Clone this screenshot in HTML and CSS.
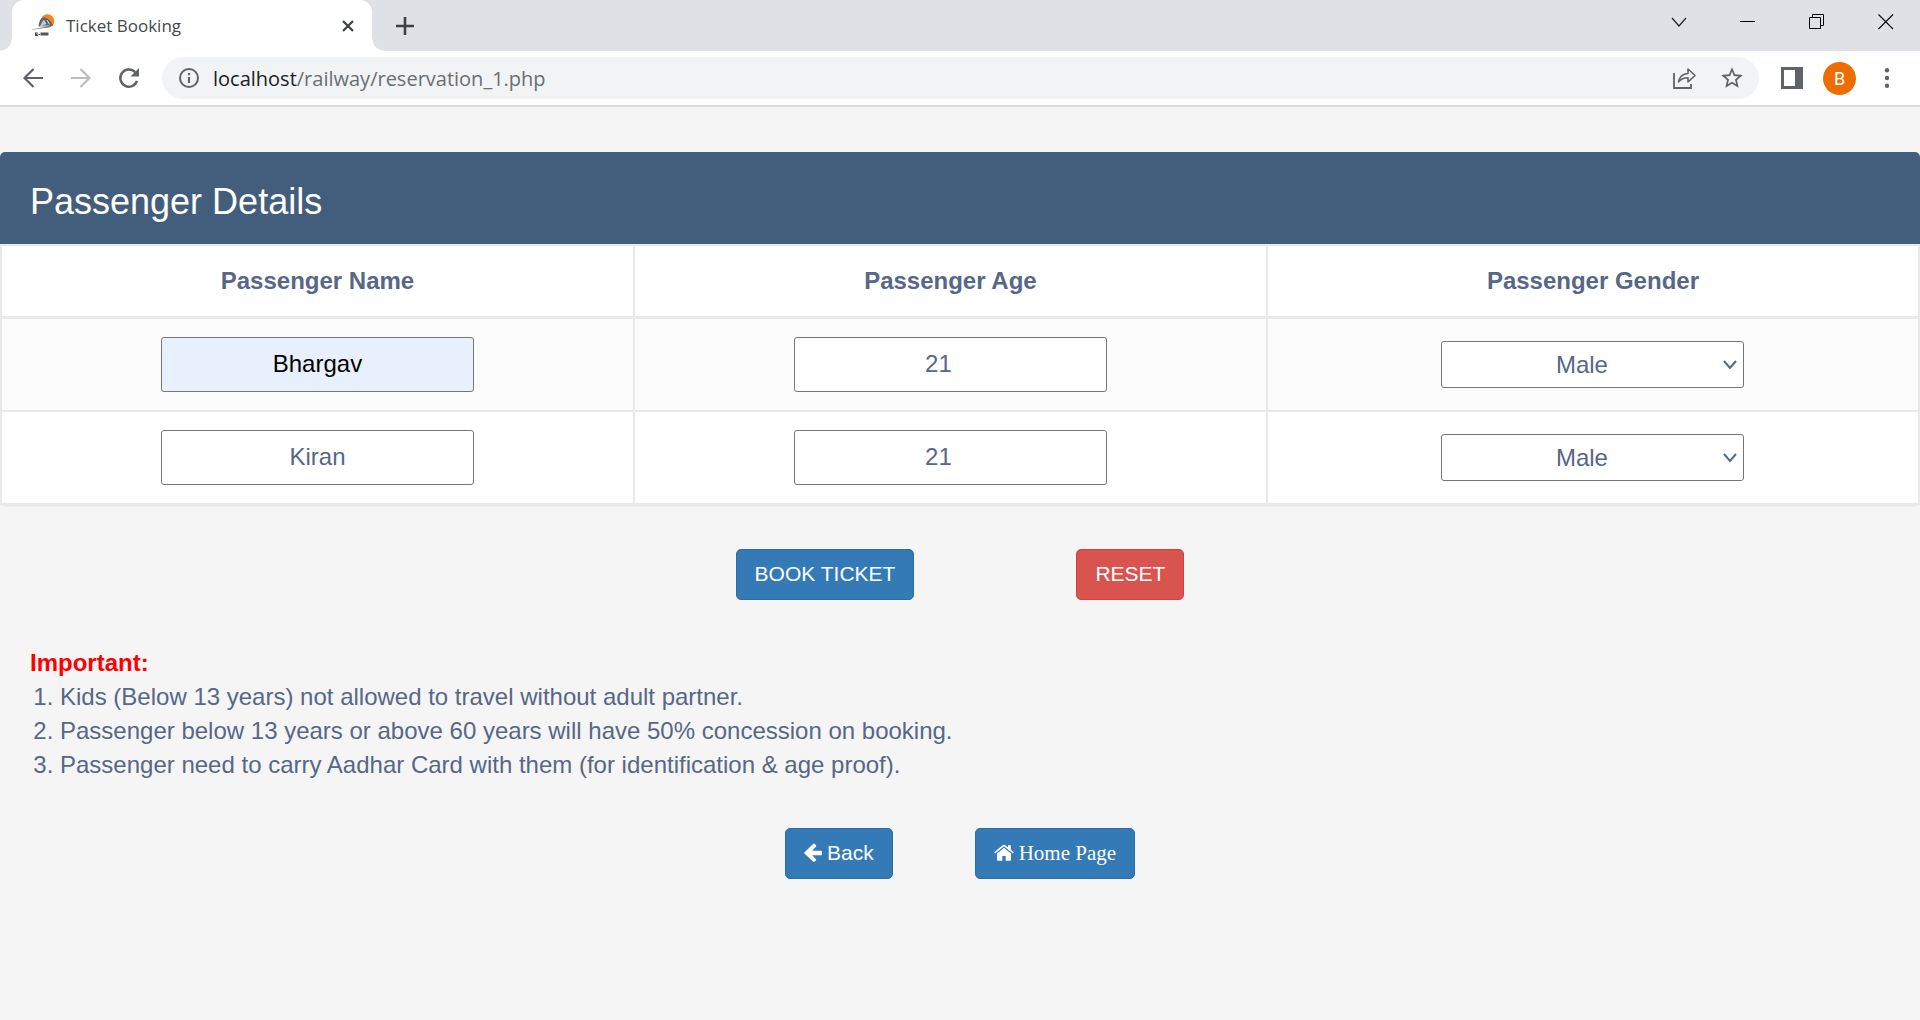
FILE: index.html
```html
<!DOCTYPE html>
<html lang="en">
<head>
<meta charset="utf-8">
<meta name="viewport" content="width=device-width, initial-scale=1">
<title>Ticket Booking</title>
<link rel="stylesheet" href="styles.css">
</head>
<body>
<header class="browser">
  <div class="tab-strip">
    <div class="tab">
      <svg class="favicon" width="24" height="24" viewBox="0 0 24 24" aria-hidden="true">
        <circle cx="16.500" cy="7" r="6.800" fill="#f58220"/>
        <path d="M7.500 12.500C8 7 10 3 13.500 3.500C18 4.500 20.500 8 22 11.500L19 12.500H8Z" fill="#5a646c"/>
        <path d="M10.500 9L13 5.500L15.500 10L9.500 12Z" fill="#c5ccd2"/>
        <path d="M16 6L18.500 10.500M9 12H18" stroke="#dfe4e8" stroke-width="1" fill="none"/>
        <path d="M0 16C6 14 12 14 22.500 10.500C19 14 9 14.500 0 16Z" fill="#777"/>
        <path d="M4.500 18.500V22M4.500 19H7M4.500 20.500H6.500M4.500 21.500H7M7.500 20.500H9" stroke="#444" stroke-width="1" fill="none"/>
        <path d="M9.500 18.500H17.500V21.500H9.500Z" fill="#555"/>
      </svg>
      <span class="tab-title">Ticket Booking</span>
      <button class="icon-button tab-close" type="button" aria-label="Close tab">
        <svg width="14" height="14" viewBox="0 0 14 14"><path d="M2 2L12 12M12 2L2 12" stroke="#3c4043" stroke-width="2.200"/></svg>
      </button>
    </div>
    <button class="icon-button new-tab" type="button" aria-label="New tab">
      <svg width="20" height="20" viewBox="0 0 20 20"><path d="M10 1V19M1 10H19" stroke="#3c4043" stroke-width="2.600"/></svg>
    </button>
    <div class="window-controls">
      <button class="icon-button" type="button" aria-label="Search tabs">
        <svg width="16" height="16" viewBox="0 0 16 16"><path d="M1 4L8 12L15 4" fill="none" stroke="#222" stroke-width="1.200"/></svg>
      </button>
      <button class="icon-button" type="button" aria-label="Minimize">
        <svg width="16" height="16" viewBox="0 0 16 16"><path d="M0 7.500H15" stroke="#000" stroke-width="1"/></svg>
      </button>
      <button class="icon-button" type="button" aria-label="Restore">
        <svg width="16" height="16" viewBox="0 0 16 16"><path d="M.5 3.500H11.500V14.500H.5ZM3.500 3.500V.5H14.500V11.500H11.500" fill="none" stroke="#000" stroke-width="1"/></svg>
      </button>
      <button class="icon-button" type="button" aria-label="Close window">
        <svg width="16" height="16" viewBox="0 0 16 16"><path d="M.5 .5L15 15M15 .5L.5 15" stroke="#111" stroke-width="1.200"/></svg>
      </button>
    </div>
  </div>
  <div class="toolbar">
    <nav class="history">
      <button class="icon-button" type="button" aria-label="Back">
        <svg width="20" height="20" viewBox="0 0 20 20"><path d="M20 10H2M10.500 1L1.500 10L10.500 19" fill="none" stroke="#5f6368" stroke-width="2.200"/></svg>
      </button>
      <button class="icon-button" type="button" aria-label="Forward">
        <svg width="20" height="20" viewBox="0 0 20 20"><path d="M0 10H18M9.500 1L18.500 10L9.500 19" fill="none" stroke="#babcbe" stroke-width="2.200"/></svg>
      </button>
      <button class="icon-button" type="button" aria-label="Reload">
        <svg width="22" height="22" viewBox="0 0 22 22"><path d="M19 14A8.600 8.600 0 1 1 17.200 5.200" fill="none" stroke="#5f6368" stroke-width="2.400"/><path d="M21 1V9.500H12.500Z" fill="#5f6368"/></svg>
      </button>
    </nav>
    <div class="address-bar">
      <button class="icon-button" type="button" aria-label="Site information">
        <svg width="22" height="22" viewBox="0 0 22 22"><circle cx="11" cy="11" r="9" fill="none" stroke="#5f6368" stroke-width="2"/><path d="M11 10V16" stroke="#5f6368" stroke-width="2.200"/><path d="M11 6V8.200" stroke="#5f6368" stroke-width="2.200"/></svg>
      </button>
      <div class="url"><span class="host">localhost</span>/railway/reservation_1.php</div>
      <div class="address-actions">
        <button class="icon-button" type="button" aria-label="Share">
          <svg width="24" height="24" viewBox="0 0 24 24"><path d="M1 7V22H18V18" fill="none" stroke="#5f6368" stroke-width="1.800"/><path d="M5.500 16C6.500 10.500 10 7.800 15 7.500V3L22 9.500L15 16V11.800C11 11.800 8 13 5.500 16Z" fill="none" stroke="#5f6368" stroke-width="1.600" stroke-linejoin="round"/></svg>
        </button>
        <button class="icon-button" type="button" aria-label="Bookmark this tab">
          <svg width="26" height="26" viewBox="0 0 24 24"><path fill="#5f6368" d="M22 9.240l-7.190-.62L12 2 9.190 8.630 2 9.240l5.460 4.730L5.820 21 12 17.270 18.180 21l-1.630-7.030L22 9.240zM12 15.400l-3.760 2.270 1-4.280-3.320-2.880 4.380-.38L12 6.100l1.710 4.040 4.380.38-3.320 2.880 1 4.280L12 15.400z"/></svg>
        </button>
      </div>
    </div>
    <div class="profile">
      <button class="icon-button" type="button" aria-label="Side panel">
        <svg width="22" height="22" viewBox="0 0 22 22"><path fill="#5f6368" fill-rule="evenodd" d="M0 0H22V22H0ZM3 3V19H14V3Z"/></svg>
      </button>
      <button class="avatar" type="button">B</button>
      <button class="icon-button" type="button" aria-label="Menu">
        <svg width="20" height="20" viewBox="0 0 20 20" fill="#5f6368"><circle cx="10" cy="2.200" r="2.200"/><circle cx="10" cy="10" r="2.200"/><circle cx="10" cy="17.800" r="2.200"/></svg>
      </button>
    </div>
  </div>
</header>

<main class="page">
  <form>
    <div class="table-card">
      <h1 class="table-title">Passenger Details</h1>
      <table class="passengers">
        <thead>
          <tr>
            <th scope="col" id="name">Passenger Name</th>
            <th scope="col" id="age">Passenger Age</th>
            <th scope="col" id="gender" class="col-gender">Passenger Gender</th>
          </tr>
        </thead>
        <tbody>
          <tr>
            <td><input class="field autofilled" type="text" value="Bhargav" aria-labelledby="name"></td>
            <td><input class="field number" type="number" value="21" aria-labelledby="age"></td>
            <td>
              <div class="select-wrap">
                <select class="select" aria-labelledby="gender"><option>Male</option><option>Female</option></select>
                <svg class="chevron" width="16" height="12" viewBox="0 0 16 12" aria-hidden="true"><path d="M2 2L8 9L14 2" fill="none" stroke="#566787" stroke-width="2"/></svg>
              </div>
            </td>
          </tr>
          <tr>
            <td><input class="field" type="text" value="Kiran" aria-labelledby="name"></td>
            <td><input class="field number" type="number" value="21" aria-labelledby="age"></td>
            <td>
              <div class="select-wrap">
                <select class="select" aria-labelledby="gender"><option>Male</option><option>Female</option></select>
                <svg class="chevron" width="16" height="12" viewBox="0 0 16 12" aria-hidden="true"><path d="M2 2L8 9L14 2" fill="none" stroke="#566787" stroke-width="2"/></svg>
              </div>
            </td>
          </tr>
        </tbody>
      </table>
    </div>
    <div class="form-actions">
      <button class="btn btn-primary" type="submit">BOOK TICKET</button>
      <button class="btn btn-danger" type="reset">RESET</button>
    </div>
  </form>

  <section class="notes">
    <h2 class="notes-title">Important:</h2>
    <ol class="notes-list">
      <li>Kids (Below 13 years) not allowed to travel without adult partner.</li>
      <li>Passenger below 13 years or above 60 years will have 50% concession on booking.</li>
      <li>Passenger need to carry Aadhar Card with them (for identification &amp; age proof).</li>
    </ol>
  </section>

  <nav class="page-links">
    <a class="btn btn-primary" href="#back">
      <svg width="18" height="20" viewBox="0 0 18 20" aria-hidden="true"><path fill="#fff" d="M18 8.800V11.200Q18 12.300 17 12.300H8.200L11.800 15.900Q12.600 16.700 11.800 17.500L10.700 18.600Q9.900 19.400 9.100 18.600L.6 10.800Q-.2 10 .6 9.200L9.100 1Q9.900 .2 10.700 1L11.800 2.100Q12.600 2.900 11.800 3.700L8.200 7.700H17Q18 7.700 18 8.800Z"/></svg>
      Back
    </a>
    <a class="btn btn-primary btn-home" href="#home">
      <svg width="20" height="18" viewBox="0 0 20 18" aria-hidden="true"><path fill="#fff" d="M10 4.800L17 10.500V15.800Q17 16.800 16 16.800H11.700V12H8.300V16.800H4Q3 16.800 3 15.800V10.500ZM9 1Q10 .3 11 1L14 3.400V1.200H16.800V5.700L19.800 8.200L18.800 9.400L10 2.400L1.200 9.400L.2 8.200Z"/><path fill="#fff" d="M10 3.800L17 9.500V11H3V9.500Z"/><path d="M1.800 9.700L10 3.100L18.200 9.700" fill="none" stroke="#337ab7" stroke-width=".8"/></svg>
      Home Page
    </a>
  </nav>
</main>
</body>
</html>
```
FILE: styles.css
```css
* {
  box-sizing: border-box;
}

body {
  margin: 0;
  min-height: 100vh;
  background: #f5f5f5;
  color: #566787;
  font-family: "Liberation Sans", Arial, sans-serif;
  font-size: 24px;
  line-height: 34px;
}

button,
input,
select {
  font: inherit;
  color: inherit;
}

/* Browser window frame */
.browser {
  background: #fff;
  border-bottom: 2px solid #d9dadc;
  font-family: "Open Sans", "Segoe UI", sans-serif;
}

.icon-button {
  display: flex;
  align-items: center;
  justify-content: center;
  flex: none;
  width: 32px;
  height: 32px;
  padding: 0;
  border: 0;
  background: none;
}

.tab-strip {
  display: flex;
  align-items: center;
  height: 51px;
  padding-left: 12px;
  background: #dee1e6;
}

.tab {
  position: relative;
  display: flex;
  align-items: center;
  gap: 11px;
  width: 360px;
  height: 51px;
  padding: 0 9px 0 19px;
  border-radius: 12px 12px 0 0;
  background: #fff;
}

.tab::before,
.tab::after {
  content: "";
  position: absolute;
  bottom: 0;
  width: 12px;
  height: 12px;
}

.tab::before {
  left: -12px;
  background: radial-gradient(circle at 0 0, #dee1e6 11px, #fff 12px);
}

.tab::after {
  right: -12px;
  background: radial-gradient(circle at 100% 0, #dee1e6 11px, #fff 12px);
}

.tab-title {
  flex: 1;
  color: #45484c;
  font-size: 17px;
}

.tab-close {
  width: 30px;
}

.new-tab {
  margin-left: 17px;
}

.window-controls {
  display: flex;
  align-self: flex-start;
  gap: 37px;
  margin-left: auto;
  padding: 6px 18px 0 0;
}

.toolbar {
  display: flex;
  align-items: center;
  gap: 17px;
  padding: 6px 17px;
}

.history,
.profile {
  display: flex;
  align-items: center;
  gap: 16px;
}

.profile {
  gap: 15px;
}

.address-bar {
  display: flex;
  align-items: center;
  flex: 1;
  gap: 8px;
  height: 42px;
  padding: 0 11px;
  border-radius: 21px;
  background: #f1f3f4;
}

.url {
  flex: 1;
  padding-top: 2px;
  color: #6b6e73;
  font-size: 20px;
}

.host {
  color: #202124;
}

.address-actions {
  display: flex;
  gap: 15px;
}

.avatar {
  width: 33px;
  height: 33px;
  padding: 0;
  border: 0;
  border-radius: 50%;
  background: #ef6c00;
  color: #fff;
  font-family: Roboto, sans-serif;
  font-size: 18px;
  line-height: 33px;
}

/* Passenger table */
.page {
  padding-top: 45px;
}

.table-card {
  border-radius: 5px;
  background: #fff;
  box-shadow: 0 1px 2px rgba(0, 0, 0, 0.08);
}

.table-title {
  margin: 0;
  padding: 30px 30px 22px;
  border-radius: 5px 5px 0 0;
  background: #435d7d;
  color: #fff;
  font-size: 36px;
  font-weight: 400;
  line-height: 40px;
}

.passengers {
  width: 100%;
  table-layout: fixed;
  border-collapse: collapse;
  text-align: center;
}

.passengers th,
.passengers td {
  border: 2px solid #e9e9e9;
  padding: 18px 8px;
}

.passengers th {
  width: 33%;
  border-bottom-width: 3px;
}

.passengers .col-gender {
  width: 34%;
}

.passengers tbody tr:nth-child(odd) {
  background: #fcfcfc;
}

.field,
.select {
  border: 1px solid #767676;
  border-radius: 3px;
  background: #fff;
  text-align: center;
}

.field {
  display: block;
  width: 313px;
  max-width: 100%;
  height: 55px;
  margin: 0 auto;
  padding: 0 2px 2px;
}

.autofilled {
  background: #e8f0fe;
  color: #000;
}

.number {
  appearance: textfield;
  padding-right: 26px;
}

.number::-webkit-inner-spin-button {
  appearance: none;
  margin: 0;
}

.select-wrap {
  position: relative;
  width: 303px;
  max-width: 100%;
  margin: 0 auto;
}

.select {
  appearance: none;
  display: block;
  width: 100%;
  height: 47px;
  padding: 0 22px 0 0;
  text-align-last: center;
}

.chevron {
  position: absolute;
  top: 18px;
  right: 6px;
  pointer-events: none;
}

/* Buttons */
.btn {
  display: inline-flex;
  align-items: center;
  gap: 5px;
  height: 51px;
  padding: 0 18px 1px;
  border: 1px solid;
  border-radius: 5px;
  color: #fff;
  font-size: 21px;
  text-decoration: none;
}

.btn-primary {
  border-color: #2e6da4;
  background: #337ab7;
}

.btn-danger {
  border-color: #d43f3a;
  background: #d9534f;
}

.btn-home {
  font-family: "Liberation Serif", "Times New Roman", serif;
}

.form-actions,
.page-links {
  display: flex;
  justify-content: center;
}

.form-actions {
  gap: 162px;
  padding-top: 44px;
}

.page-links {
  gap: 82px;
  padding: 46px 0;
}

/* Notes */
.notes {
  padding: 45px 30px 0;
}

.notes-title {
  margin: 0;
  color: #f00;
  font-size: 24px;
  line-height: 35px;
}

.notes-list {
  margin: 0;
  padding-left: 30px;
}
```
